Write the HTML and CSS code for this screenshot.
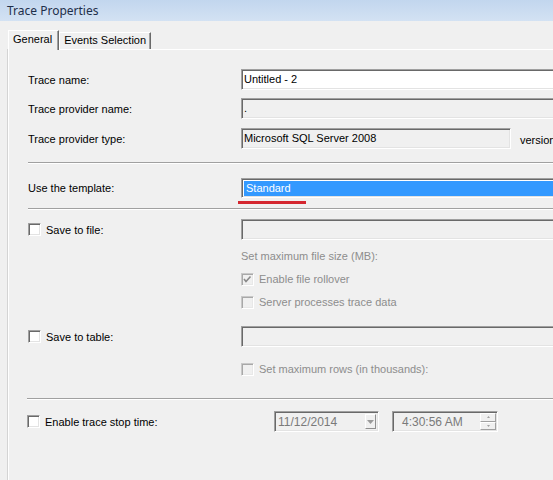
FILE: index.html
```html
<!DOCTYPE html>
<html>
<head>
<meta charset="utf-8">
<title>Trace Properties</title>
<link rel="stylesheet" href="styles.css">
</head>
<body>
<div class="window">
  <div class="titlebar">Trace Properties</div>
  <div class="client">
    <div class="tabs">
      <div class="tab active">General</div>
      <div class="tab">Events Selection</div>
    </div>
    <div class="panel">
      <div class="row r1">
        <div class="label">Trace name:</div>
        <div class="field">
          <div class="edit white w-full">Untitled - 2</div>
        </div>
      </div>
      <div class="row r2">
        <div class="label">Trace provider name:</div>
        <div class="field">
          <div class="edit w-full">.</div>
        </div>
      </div>
      <div class="row r3">
        <div class="label">Trace provider type:</div>
        <div class="field">
          <div class="edit w-type">Microsoft SQL Server 2008</div>
          <div class="version">version</div>
        </div>
      </div>
      <div class="sep s1"></div>
      <div class="row r4">
        <div class="label">Use the template:</div>
        <div class="field column">
          <div class="combo"><span class="sel">Standard</span></div>
          <div class="redline"></div>
        </div>
      </div>
      <div class="sep s2"></div>
      <div class="row r5">
        <div class="label chk-label"><span class="cb"></span><span>Save to file:</span></div>
        <div class="field">
          <div class="edit w-full"></div>
        </div>
      </div>
      <div class="sub t1">Set maximum file size (MB):</div>
      <div class="sub c1"><span class="cb dis checked"><svg width="9" height="9" viewBox="0 0 9 9"><path d="M1 4 L3 6.5 L7.5 1.5" fill="none" stroke="#8a8a8a" stroke-width="1.6"/></svg></span><span>Enable file rollover</span></div>
      <div class="sub c2"><span class="cb dis"></span><span>Server processes trace data</span></div>
      <div class="row r6">
        <div class="label chk-label"><span class="cb"></span><span>Save to table:</span></div>
        <div class="field">
          <div class="edit w-full"></div>
        </div>
      </div>
      <div class="sub c3"><span class="cb dis"></span><span>Set maximum rows (in thousands):</span></div>
      <div class="sep s3"></div>
      <div class="row r7">
        <div class="label2 chk-label"><span class="cb"></span><span>Enable trace stop time:</span></div>
        <div class="date">
          <span class="dtext">11/12/2014</span>
          <span class="dbtn"><svg width="7" height="4" viewBox="0 0 7 4"><path d="M0 0 H7 L3.5 4 Z" fill="#9a9a9a"/></svg></span>
        </div>
        <div class="time">
          <span class="ttext">4:30:56 AM</span>
          <span class="spin">
            <span class="sbtn"><svg width="3" height="2" viewBox="0 0 3 2"><path d="M0 2 H3 L1.5 0 Z" fill="#a0a0a0"/></svg></span>
            <span class="sbtn"><svg width="3" height="2" viewBox="0 0 3 2"><path d="M0 0 H3 L1.5 2 Z" fill="#a0a0a0"/></svg></span>
          </span>
        </div>
      </div>
    </div>
  </div>
</div>
</body>
</html>
```
FILE: styles.css
```css
html, body {
  margin: 0;
  padding: 0;
  width: 553px;
  height: 480px;
  overflow: hidden;
  background: #f0f0f0;
}
.window {
  width: 553px;
  height: 480px;
  overflow: hidden;
  font-family: "Liberation Sans", Arial, sans-serif;
  font-size: 11px;
  color: #000;
}
.titlebar {
  height: 21px;
  line-height: 21px;
  padding-left: 7px;
  background: linear-gradient(#c2d6ee, #d3e2f3);
  color: #1e2f4a;
  font-family: "Noto Sans", "Open Sans", sans-serif;
  font-size: 12px;
}
.client {
  padding-left: 8px;
  padding-top: 8px;
}
.tabs {
  display: flex;
  align-items: flex-end;
  height: 20px;
  position: relative;
  z-index: 1;
}
.tab {
  height: 16px;
  line-height: 15px;
  padding: 0 4px 0 4px;
  border: 1px solid #fff;
  border-right: 1px solid #696969;
  border-bottom: none;
  box-shadow: inset -1px 0 0 #a0a0a0;
  background: #f0f0f0;
  white-space: nowrap;
}
.tab.active {
  height: 19px;
  line-height: 17px;
  padding: 0 6px 0 4px;
  margin-bottom: -1px;
  border-right: 1px solid #696969;
}
.panel {
  box-sizing: border-box;
  border-top: 1px solid #fff;
  border-left: 1px solid #fff;
  box-shadow: -1px 0 0 #d4d4d4;
  height: 431px;
  padding-top: 19px;
  padding-left: 19px;
}
.row {
  display: flex;
  align-items: center;
}
.label {
  width: 213px;
  flex: none;
}
.label2 {
  width: 247px;
  flex: none;
}
.chk-label {
  display: flex;
  align-items: center;
}
.field {
  display: flex;
  align-items: center;
}
.field.column {
  flex-direction: column;
  align-items: flex-start;
  position: relative;
}
.edit {
  box-sizing: border-box;
  height: 21px;
  line-height: 19px;
  padding-left: 2px;
  border: 1px solid;
  border-color: #a0a0a0 #fff #fff #a0a0a0;
  box-shadow: inset 1px 1px 0 #696969, inset -1px -1px 0 #e3e3e3;
  background: #f0f0f0;
  white-space: nowrap;
}
.edit.white { background: #fff; }
.w-full { width: 330px; }
.w-type { width: 270px; }
.version {
  margin-left: 9px;
  margin-top: 2px;
  white-space: nowrap;
}
.r1 { height: 21px; }
.r2 { height: 21px; margin-top: 8px; }
.r3 { height: 21px; margin-top: 9px; }
.sep {
  height: 1px;
  background: #a0a0a0;
  border-bottom: 1px solid #fff;
  margin-right: -20px;
}
.s1 { margin-top: 13px; }
.r4 { height: 20px; margin-top: 14px; }
.combo {
  box-sizing: border-box;
  width: 330px;
  height: 20px;
  border: 1px solid;
  border-color: #a0a0a0 #fff #fff #a0a0a0;
  box-shadow: inset 1px 1px 0 #696969, inset -1px -1px 0 #e3e3e3;
  background: #fff;
  padding: 2px 0 0 2px;
}
.sel {
  display: block;
  height: 15px;
  line-height: 15px;
  background: #3399ff;
  color: #fff;
  padding-left: 2px;
}
.redline {
  position: absolute;
  left: -3px;
  top: 23px;
  width: 68px;
  height: 3px;
  background: #d4262f;
}
.s2 { margin-top: 10px; }
.r5 { height: 21px; margin-top: 9px; }
.cb {
  box-sizing: border-box;
  width: 13px;
  height: 13px;
  flex: none;
  margin-right: 5px;
  border: 1px solid;
  border-color: #a0a0a0 #fff #fff #a0a0a0;
  box-shadow: inset 1px 1px 0 #696969, inset -1px -1px 0 #e3e3e3;
  background: #fff;
  display: flex;
  align-items: center;
  justify-content: center;
}
.cb.dis {
  background: #f0f0f0;
  border-color: #c8c8c8 #fff #fff #c8c8c8;
  box-shadow: inset 1px 1px 0 #a8a8a8, inset -1px -1px 0 #e8e8e8;
}
.sub {
  margin-left: 213px;
  color: #8d8d8d;
  display: flex;
  align-items: center;
  height: 14px;
}
.t1 { margin-top: 9px; }
.c1 { margin-top: 9px; }
.c2 { margin-top: 9px; }
.r6 { height: 21px; margin-top: 17px; }
.c3 { margin-top: 15px; }
.s3 { margin-top: 22px; margin-left: -1px; }
.r7 { height: 21px; margin-top: 11px; margin-left: -1px; }
.date {
  box-sizing: border-box;
  width: 105px;
  height: 21px;
  border: 1px solid;
  border-color: #a0a0a0 #fff #fff #a0a0a0;
  box-shadow: inset 1px 1px 0 #696969, inset -1px -1px 0 #e3e3e3;
  display: flex;
  align-items: center;
  justify-content: space-between;
  padding: 0 2px 0 3px;
  color: #7a7a7a;
  font-size: 12px;
}
.dbtn {
  width: 11px;
  height: 15px;
  box-sizing: border-box;
  border: 1px solid;
  border-color: #fff #8f8f8f #8f8f8f #fff;
  background: #f0f0f0;
  display: flex;
  align-items: center;
  justify-content: center;
}
.time {
  box-sizing: border-box;
  width: 106px;
  height: 21px;
  margin-left: 13px;
  border: 1px solid;
  border-color: #a0a0a0 #fff #fff #a0a0a0;
  box-shadow: inset 1px 1px 0 #696969, inset -1px -1px 0 #e3e3e3;
  display: flex;
  align-items: center;
  justify-content: space-between;
  padding: 0 1px 0 9px;
  color: #7a7a7a;
  font-size: 12px;
}
.spin {
  display: flex;
  flex-direction: column;
  width: 16px;
  height: 17px;
}
.sbtn {
  flex: 1;
  box-sizing: border-box;
  border: 1px solid;
  border-color: #fff #a0a0a0 #a0a0a0 #fff;
  display: flex;
  align-items: center;
  justify-content: center;
}
```
